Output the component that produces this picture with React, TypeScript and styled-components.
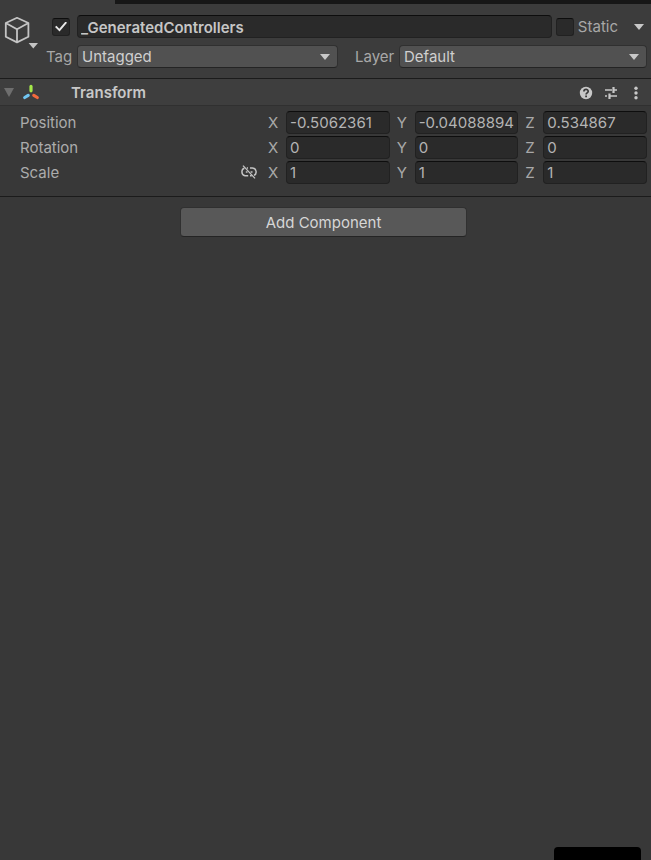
import React from "react";
import styled, { createGlobalStyle } from "styled-components";

const GlobalStyle = createGlobalStyle`
  * { box-sizing: border-box; }
  body {
    margin: 0;
    background: #383838;
    color: #a8a8a8;
    font-family: Inter, "Liberation Sans", sans-serif;
    font-size: 15px;
    line-height: 20px;
    overflow: hidden;
  }
  button, input, select { font: inherit; margin: 0; }
`;

const Panel = styled.main`
  min-height: 100vh;
  display: flex;
  flex-direction: column;
`;

const TabStrip = styled.div`
  height: 4px;
  margin-left: 115px;
  background: #171717;
`;

const Top = styled.div`
  background: #3c3c3c;
`;

const ObjectHeader = styled.header`
  display: flex;
  gap: 4px;
  padding: 11px 4px 10px;
  border-bottom: 1px solid #1b1b1b;
`;

const IconButton = styled.button<{ $w: number; $h: number }>`
  display: flex;
  flex: none;
  align-items: center;
  justify-content: center;
  width: ${(p) => p.$w}px;
  height: ${(p) => p.$h}px;
  padding: 0;
  border: 0;
  background: none;
  color: #c4c4c4;

  > svg { flex: none; }
`;

const HeaderRows = styled.div`
  flex: 1;
  min-width: 0;
  display: flex;
  flex-direction: column;
  gap: 7px;
`;

const HeaderRow = styled.div`
  display: flex;
  align-items: center;
`;

const CheckBox = styled.input`
  appearance: none;
  flex: none;
  display: grid;
  place-items: center;
  width: 18px;
  height: 18px;
  border: 1px solid #212121;
  border-top-color: #0d0d0d;
  border-radius: 3px;
  background: #2a2a2a;

  &:checked::before {
    content: "";
    width: 12px;
    height: 10px;
    background: #e8e8e8;
    clip-path: polygon(0 55%, 12% 42%, 36% 72%, 88% 0, 100% 12%, 38% 100%);
  }
`;

const ActiveBox = styled(CheckBox)`
  margin: 0 7px 0 10px;
`;

const TextField = styled.input<{ $bold?: boolean }>`
  flex: 1;
  min-width: 0;
  width: 100%;
  height: 23px;
  padding: ${(p) => (p.$bold ? "1px 3px 0" : "0 3px")};
  border: 1px solid #212121;
  border-top-color: #0d0d0d;
  border-radius: 4px;
  outline: 0;
  background: #2a2a2a;
  color: ${(p) => (p.$bold ? "#c6c6c6" : "#b4b4b4")};
  font-weight: ${(p) => (p.$bold ? 600 : 400)};
`;

const StaticLabel = styled.label`
  display: flex;
  align-items: center;
  gap: 4px;
  margin: 0 13px 0 4px;
`;

const FieldLabel = styled.label<{ $width: number; $indent: number }>`
  flex: none;
  width: ${(p) => p.$width}px;
  padding-left: ${(p) => p.$indent}px;
`;

const SelectWrap = styled.div<{ $grow: number }>`
  display: grid;
  flex: ${(p) => p.$grow} 1 0;
  min-width: 0;
  align-items: center;

  > * { grid-area: 1 / 1; }
  > svg { justify-self: end; margin-right: 8px; pointer-events: none; }
`;

const Select = styled.select`
  appearance: none;
  width: 100%;
  height: 23px;
  padding: 0 24px 0 4px;
  border: 1px solid #303030;
  border-bottom-color: #242424;
  border-radius: 4px;
  background: #515151;
  color: #cfcfcf;
`;

const ComponentHeader = styled.div`
  display: flex;
  align-items: center;
  height: 27px;
  padding: 1px 3px 0 4px;
  background: #3e3e3e;
  border-bottom: 1px solid #303030;
`;

const IconSlot = styled.span`
  display: flex;
  margin-left: 8px;
`;

const Title = styled.h2`
  flex: 1;
  margin: 0 0 0 31px;
  color: #c8c8c8;
  font-size: 15px;
  font-weight: 600;
`;

const Tools = styled.div`
  display: flex;
  gap: 1px;
`;

const Properties = styled.section`
  display: flex;
  flex-direction: column;
  gap: 2px;
  padding: 5px 4px 12px 20px;
  border-bottom: 1px solid #1b1b1b;
`;

const PropertyRow = styled.div`
  display: grid;
  grid-template-columns: 241px repeat(3, minmax(0, 1fr));
  column-gap: 7px;
  align-items: center;
`;

const PropertyName = styled.div`
  display: flex;
  align-items: center;
  justify-content: space-between;
  color: #acacac;
`;

const Axis = styled.label`
  display: grid;
  grid-template-columns: 18px minmax(0, 1fr);
  align-items: center;
`;

const Footer = styled.div`
  display: flex;
  justify-content: center;
  padding: 10px 4px 0 0;
`;

const AddButton = styled.button`
  width: 44%;
  min-width: 287px;
  height: 30px;
  padding: 1px 0 0;
  border: 1px solid #303030;
  border-bottom-color: #242424;
  border-radius: 4px;
  background: #585858;
  color: #d6d6d6;
`;

const Notch = styled.div`
  position: fixed;
  right: 10px;
  bottom: 0;
  width: 87px;
  height: 13px;
  border-radius: 4px 4px 0 0;
  background: #000;
`;

const Caret = () => (
  <svg width="10" height="6" viewBox="0 0 10 6" aria-hidden="true">
    <path d="M0 0h10L5 6z" fill="#c8c8c8" />
  </svg>
);

const CubeIcon = () => (
  <svg width="34" height="34" viewBox="0 0 34 34" fill="none" aria-hidden="true">
    <path
      d="M13 2.8 24.4 8V21.8L13 27.4 1.8 21.8V8zM1.8 8 13 14.2 24.4 8M13 14.2V27.4"
      stroke="#c4c4c4"
      strokeWidth="1.8"
      strokeLinejoin="round"
    />
    <path d="M24.6 28h9.4l-4.7 5.4z" fill="#c4c4c4" />
  </svg>
);

const TransformIcon = () => (
  <svg width="18" height="17" viewBox="0 0 18 17" strokeWidth="3.2" strokeLinecap="round" aria-hidden="true">
    <path d="M9 2.4v4.4" stroke="#a5e84a" />
    <path d="M6.2 11.4 2.7 13.5" stroke="#70c5f0" />
    <path d="M11.8 11.4 15.3 13.5" stroke="#f26a3d" />
  </svg>
);

const HelpIcon = () => (
  <svg width="14" height="14" viewBox="0 0 14 14" fill="none" aria-hidden="true">
    <circle cx="7" cy="7" r="6.2" fill="#c8c8c8" />
    <path d="M4.9 5.5c0-2.8 4.3-2.8 4.3-.2 0 1.6-2.1 1.6-2.1 3.2" stroke="#3a3a3a" strokeWidth="1.7" />
    <path d="M6.2 9.6h1.8v1.7H6.2z" fill="#3a3a3a" />
  </svg>
);

const PresetIcon = () => (
  <svg width="14" height="14" viewBox="0 0 14 14" fill="none" stroke="#c8c8c8" aria-hidden="true">
    <path d="M1 4h7M10 4h3M1 10h2M6 10h7" strokeWidth="1.5" />
    <path d="M9.5 1v6M5.5 7.4v5.6" strokeWidth="2.2" />
  </svg>
);

const MoreIcon = () => (
  <svg width="4" height="14" viewBox="0 0 4 14" fill="#c8c8c8" aria-hidden="true">
    <circle cx="2" cy="2.2" r="1.7" />
    <circle cx="2" cy="7" r="1.7" />
    <circle cx="2" cy="11.8" r="1.7" />
  </svg>
);

const UnlinkIcon = () => (
  <svg width="16" height="16" viewBox="0 0 16 16" fill="none" stroke="#c4c4c4" strokeWidth="1.5" aria-hidden="true">
    <path d="M3.4 3.2C0 4 0 10.2 4 10.8H7.2M5.8 3H7M9 3h2.4c4.4.2 4.8 6 1.6 7.4M10.8 10.8H9M4.8 6.9h1.7M9.6 6.9h1.9" />
    <path d="M2 .6 14 13.4" strokeWidth="1.3" />
  </svg>
);

const rows = [
  { name: "Position", values: ["-0.5062361", "-0.04088894", "0.534867"] },
  { name: "Rotation", values: ["0", "0", "0"] },
  { name: "Scale", values: ["1", "1", "1"], linkable: true },
];

export default function App() {
  return (
    <Panel>
      <GlobalStyle />
      <Top>
        <TabStrip />
        <ObjectHeader>
          <IconButton $w={34} $h={34} aria-label="Select icon">
            <CubeIcon />
          </IconButton>
          <HeaderRows>
            <HeaderRow>
              <ActiveBox type="checkbox" defaultChecked aria-label="Active" />
              <TextField $bold defaultValue="_GeneratedControllers" aria-label="Name" />
              <StaticLabel>
                <CheckBox type="checkbox" />
                Static
              </StaticLabel>
              <IconButton $w={16} $h={20} aria-label="Static options">
                <Caret />
              </IconButton>
            </HeaderRow>
            <HeaderRow>
              <FieldLabel $width={35} $indent={4} htmlFor="tag">Tag</FieldLabel>
              <SelectWrap $grow={261}>
                <Select id="tag"><option>Untagged</option></Select>
                <Caret />
              </SelectWrap>
              <FieldLabel $width={61} $indent={17} htmlFor="layer">Layer</FieldLabel>
              <SelectWrap $grow={248}>
                <Select id="layer"><option>Default</option></Select>
                <Caret />
              </SelectWrap>
            </HeaderRow>
          </HeaderRows>
        </ObjectHeader>
      </Top>
      <ComponentHeader>
        <IconButton $w={10} $h={20} aria-label="Collapse Transform">
          <svg width="10" height="9" viewBox="0 0 10 9" aria-hidden="true">
            <path d="M0 0h10L5 9z" fill="#6e6e6e" />
          </svg>
        </IconButton>
        <IconSlot><TransformIcon /></IconSlot>
        <Title>Transform</Title>
        <Tools>
          <IconButton $w={24} $h={20} aria-label="Help"><HelpIcon /></IconButton>
          <IconButton $w={24} $h={20} aria-label="Presets"><PresetIcon /></IconButton>
          <IconButton $w={24} $h={20} aria-label="More"><MoreIcon /></IconButton>
        </Tools>
      </ComponentHeader>
      <Properties>
        {rows.map((row) => (
          <PropertyRow key={row.name}>
            <PropertyName>
              {row.name}
              {row.linkable && (
                <IconButton $w={24} $h={20} aria-label="Constrain proportions"><UnlinkIcon /></IconButton>
              )}
            </PropertyName>
            {row.values.map((value, i) => (
              <Axis key={i}>
                {"XYZ"[i]}
                <TextField defaultValue={value} />
              </Axis>
            ))}
          </PropertyRow>
        ))}
      </Properties>
      <Footer>
        <AddButton>Add Component</AddButton>
      </Footer>
      <Notch />
    </Panel>
  );
}
